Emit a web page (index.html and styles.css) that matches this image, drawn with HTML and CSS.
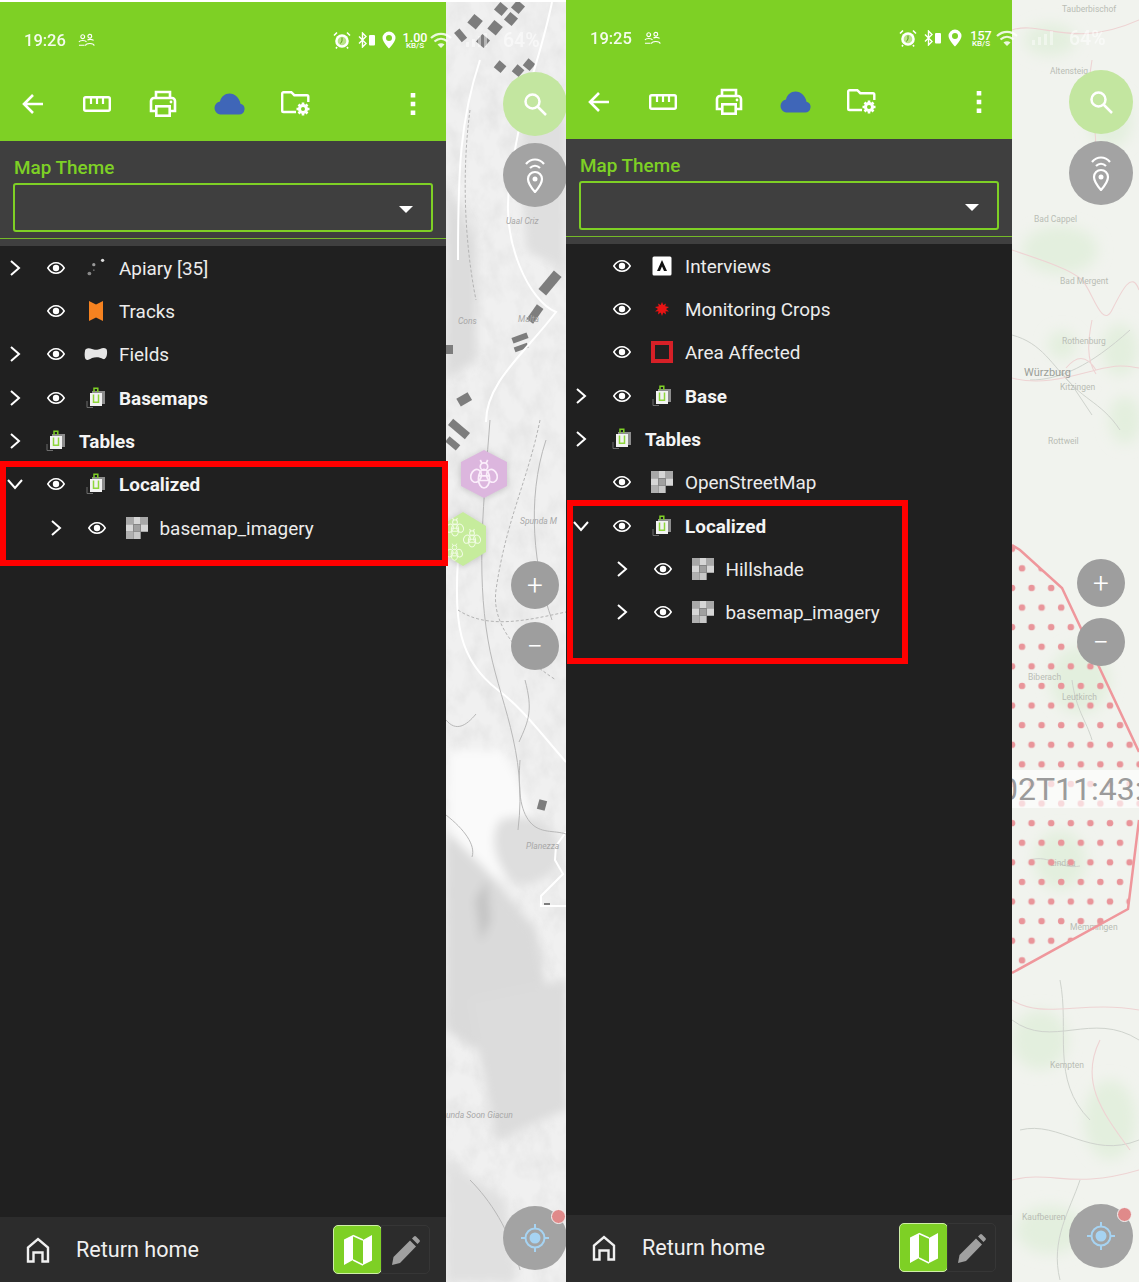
FILE: index.html
```html
<!DOCTYPE html>
<html lang="en">
  <head>
    <meta charset="utf-8" />
    <title>Map layers</title>
    <link rel="stylesheet" href="styles.css">
  </head>
  <body>
    <!-- shared icons -->
    <svg class="defs" width="0" height="0">
      <symbol id="i-back" viewBox="0 0 24 24"><path d="M22 12H4M12 3l-9 9 9 9" fill="none" stroke="currentColor" stroke-width="2.6"/></symbol>
      <symbol id="i-ruler" viewBox="0 0 28 16"><rect x="1.2" y="1.2" width="25.6" height="13.6" rx="1.5" fill="none" stroke="currentColor" stroke-width="2.4"/><path d="M8 2v6M14 2v6M20 2v6" stroke="currentColor" stroke-width="2.2"/></symbol>
      <symbol id="i-print" viewBox="0 0 28 28"><path d="M7 8V2h14v6M7 21H2V11a3 3 0 0 1 3-3h18a3 3 0 0 1 3 3v10h-5" fill="none" stroke="currentColor" stroke-width="2.6"/><rect x="7.3" y="16.3" width="13.4" height="9.4" fill="none" stroke="currentColor" stroke-width="2.6"/><circle cx="22" cy="12" r="1.4" fill="currentColor"/></symbol>
      <symbol id="i-cloud" viewBox="0 0 31 22"><path d="M6 21.5h19a5.500 5.500 0 0 0 1.500-10.800C25.500 5 21 .5 15.500.5 11 .5 7 3.500 6 8.500A6.500 6.500 0 0 0 .5 15 6.500 6.500 0 0 0 6 21.500z" fill="currentColor"/></symbol>
      <symbol id="i-folder" viewBox="0 0 30 26"><path d="M15 21H2.500a1.300 1.300 0 0 1-1.300-1.300V2.500A1.300 1.300 0 0 1 2.500 1.200h7.800l3 3H26a1.300 1.300 0 0 1 1.300 1.300V11" fill="none" stroke="currentColor" stroke-width="2.400"/><circle cx="22" cy="18" r="3.500" fill="none" stroke="currentColor" stroke-width="3"/><path d="M22 11.500v3M22 21.500v3M15.500 18h3M25.500 18h3M17.500 13.500l2 2M24.500 20.500l2 2M26.500 13.500l-2 2M19.500 20.500l-2 2" stroke="currentColor" stroke-width="2.600"/></symbol>
      <symbol id="i-more" viewBox="0 0 6 24"><path d="M.7 1h4.600v4.600H.7zM.7 9.700h4.600v4.600H.7zM.7 18.400h4.600V23H.7z" fill="currentColor"/></symbol>
      <symbol id="i-people" viewBox="0 0 18 14"><circle cx="5" cy="3.500" r="2" fill="none" stroke="currentColor" stroke-width="1.200"/><circle cx="12.500" cy="3" r="2" fill="none" stroke="currentColor" stroke-width="1.200"/><path d="M1 9c1-2 7-2 8 0M8 13c0-3 9-3 9 0M1 12.500h6M10 7c1.500-1 5-1 6.500.5" fill="none" stroke="currentColor" stroke-width="1.200"/></symbol>
      <symbol id="i-alarm" viewBox="0 0 18 18"><circle cx="9" cy="10" r="6.800" fill="currentColor"/><circle cx="9" cy="10" r="4.300" fill="#b9e585"/><path d="M9 6.500V10l-1.500 2.500" fill="none" stroke="#5c9a18" stroke-width="1"/><path d="M1 4.500 4 1.500M17 4.500l-3-3M4 16l-1 1.500M14 16l1 1.500" stroke="currentColor" stroke-width="1.600"/></symbol>
      <symbol id="i-bt" viewBox="0 0 18 16"><path d="M1 4.500l7 7-3.500 3.500V1L8 4.500l-7 7" fill="none" stroke="currentColor" stroke-width="1.400"/><rect x="11" y="3" width="6" height="10.500" rx="1" fill="currentColor"/></symbol>
      <symbol id="i-pin" viewBox="0 0 14 18"><path fill-rule="evenodd" d="M7 .5A6.500 6.500 0 0 0 .5 7C.5 11 7 17.500 7 17.500S13.500 11 13.500 7A6.500 6.500 0 0 0 7 .5zM7 4a3 3 0 1 1 0 6 3 3 0 0 1 0-6z" fill="currentColor"/></symbol>
      <symbol id="i-wifi" viewBox="0 0 22 16"><path d="M1 6c6-5.500 14-5.500 20 0M4.500 9.500c4-3.500 9-3.500 13 0" fill="none" stroke="currentColor" stroke-width="2.200"/><path d="M7.500 12.500c2-1.800 5-1.800 7 0L11 16z" fill="currentColor"/></symbol>
      <symbol id="i-signal" viewBox="0 0 22 14"><path d="M0 9h3v5H0zM6 6h3v8H6zM12 3h3v11h-3zM18 0h3v14h-3z" fill="currentColor"/></symbol>
      <symbol id="i-chev" viewBox="0 0 12 18"><path d="M2 2l8 7-8 7" fill="none" stroke="currentColor" stroke-width="2"/></symbol>
      <symbol id="i-down" viewBox="0 0 18 12"><path d="M2 2l7 8 7-8" fill="none" stroke="currentColor" stroke-width="2"/></symbol>
      <symbol id="i-eye" viewBox="0 0 18 12"><path d="M.8 6C3 2.500 5.800.8 9 .8s6 1.700 8.200 5.200C15 9.500 12.200 11.200 9 11.200S3 9.500.8 6z" fill="none" stroke="currentColor" stroke-width="1.500"/><circle cx="9" cy="6" r="3.200" fill="currentColor"/></symbol>
      <symbol id="i-group" viewBox="0 0 20 22"><path d="M1 14v6.500h6" fill="none" stroke="#6d6d6d" stroke-width="1"/><rect x="6" y="4" width="13" height="13" fill="#8d8d8d"/><rect x="4" y="6" width="12" height="13" fill="#f2f2f2"/><path d="M8 5V1.200h3.800V5" fill="none" stroke="#7ed025" stroke-width="1.500"/><path d="M7.500 7.500v7.800h5V7.500" fill="none" stroke="#8fd63c" stroke-width="1.500"/></symbol>
      <symbol id="i-raster" viewBox="0 0 3 3"><path d="M0 0h1v1H0zM2 0h1v1H2z" fill="#a8a8a8"/><path d="M1 0h1v1H1zM0 1h1v1H0zM2 1h1v1H2z" fill="#d6d6d6"/><path d="M1 1h1v1H1z" fill="#a0a0a0"/><path d="M0 2h1v1H0z" fill="#b0b0b0"/><path d="M1 2h1v1H1z" fill="#c8c8c8"/></symbol>
      <symbol id="i-points" viewBox="0 0 20 20"><circle cx="16" cy="3" r="1.500" fill="#ddd"/><circle cx="8" cy="7" r="1.500" fill="#999"/><circle cx="4" cy="15" r="1.700" fill="#888"/><circle cx="8" cy="12" r="0.800" fill="#666"/></symbol>
      <symbol id="i-tracks" viewBox="0 0 16 22"><path d="M1 1l7 3.500L15 1v20l-7-3.500L1 21z" fill="#f58220"/></symbol>
      <symbol id="i-fields" viewBox="0 0 24 15"><path d="M1 4C1 1 5 .5 8 2c2 1 6 1 8 0 3-1.500 7-1.500 7 2 .5 4-1 9-4 8-3-2-8-2-11-1-3 2-6 3-7 0C.5 9 .5 6 1 4z" fill="#e6e6e6"/></symbol>
      <symbol id="i-tent" viewBox="0 0 20 20"><rect x=".5" y=".5" width="19" height="19" rx="1.500" fill="#fff"/><path d="M10 4l5 11H5z" fill="#111"/><path d="M10 10.500l2 4.500H8z" fill="#fff"/></symbol>
      <symbol id="i-splat" viewBox="0 0 14 14"><path d="M7 0l1.300 3L11 1.500 10.200 4.300 14 5l-3 2 3 2.500-3.500-.300L11 12.500 8.300 10.500 7 14l-1.300-3.500L3 12.500l.5-3.300L0 9.500 3 7 0 5l3.800-.700L3 1.500 5.700 3z" fill="#e81414"/></symbol>
      <symbol id="i-home" viewBox="0 0 24 26"><path d="M2 24.500V10.500L12 2l10 8.500v14h-5.500v-9h-9v9z" fill="none" stroke="currentColor" stroke-width="2.400"/></symbol>
      <symbol id="i-map" viewBox="0 0 30 32"><path d="M1 5.500L10 1v25l-9 5zM20 6l9-5v25.500L20 31z" fill="currentColor"/><path d="M10 1.500l10 4.500M10 26l10 5" stroke="currentColor" stroke-width="1.400"/></symbol>
      <symbol id="i-pencil" viewBox="0 0 30 32"><path d="M1 31l1.500-8L19 6.500l6 6L9 29zM21 4.500l2-2a1.500 1.500 0 0 1 2 0l3.500 3.500a1.500 1.500 0 0 1 0 2l-2 2z" fill="currentColor"/></symbol>
      <symbol id="i-search" viewBox="0 0 24 24"><circle cx="9.500" cy="9.500" r="7" fill="none" stroke="currentColor" stroke-width="2.500"/><path d="M14.500 14.500L23 23" stroke="currentColor" stroke-width="2.500"/></symbol>
      <symbol id="i-geo" viewBox="0 0 24 36"><path d="M3 7c5-6 13-6 18 0M7 11c3-3 7-3 10 0" fill="none" stroke="currentColor" stroke-width="2.200"/><path d="M12 15a7 7 0 0 0-7 7c0 5 7 13 7 13s7-8 7-13a7 7 0 0 0-7-7z" fill="none" stroke="currentColor" stroke-width="2.200"/><circle cx="12" cy="22" r="2.500" fill="currentColor"/></symbol>
      <symbol id="i-target" viewBox="0 0 30 30"><circle cx="15" cy="15" r="9.500" fill="none" stroke="currentColor" stroke-width="2"/><circle cx="15" cy="15" r="5.500" fill="currentColor"/><path d="M15 1v5M15 24v5M1 15h5M24 15h5" stroke="currentColor" stroke-width="2"/></symbol>
      <symbol id="i-bee" viewBox="0 0 30 36"><g fill="none" stroke="currentColor" stroke-width="1.800"><path d="M11 3l2 4M19 3l-2 4"/><circle cx="15" cy="10" r="4"/><ellipse cx="15" cy="23" rx="6" ry="10"/><path d="M9.500 20h11M9.500 25h11"/><ellipse cx="6.500" cy="20" rx="5.500" ry="7" transform="rotate(20 6.500 20)"/><ellipse cx="23.500" cy="20" rx="5.500" ry="7" transform="rotate(-20 23.500 20)"/></g></symbol>
    </svg>

    <!-- first shot -->
    <div class="phone phone-first">
      <div class="panel">
        <div class="appbar">
          <div class="status">
            <span class="clock">19:26</span>
            <svg class="st-people"><use href="#i-people"/></svg>
            <div class="sys">
              <svg class="st-alarm"><use href="#i-alarm"/></svg>
              <svg class="st-bt"><use href="#i-bt"/></svg>
              <svg class="st-pin"><use href="#i-pin"/></svg>
              <span class="speed">1.00<small>KB/S</small></span>
              <svg class="st-wifi"><use href="#i-wifi"/></svg>
              <svg class="st-signal"><use href="#i-signal"/></svg>
              <span class="batt">64%</span>
            </div>
          </div>
          <div class="toolbar">
            <svg class="tb-back"><use href="#i-back"/></svg>
            <svg class="tb-ruler"><use href="#i-ruler"/></svg>
            <svg class="tb-print"><use href="#i-print"/></svg>
            <svg class="tb-cloud"><use href="#i-cloud"/></svg>
            <svg class="tb-folder"><use href="#i-folder"/></svg>
            <svg class="tb-more"><use href="#i-more"/></svg>
          </div>
        </div>
        <div class="theme">
          <div class="theme-label">Map Theme</div>
          <div class="theme-select"><span class="caret"></span></div>
          <div class="theme-rule"></div>
        </div>
        <div class="layers">
          <div class="row">
            <span class="chev"><svg class="ic-chev"><use href="#i-chev"/></svg></span>
            <span class="slot"><svg class="ic-eye"><use href="#i-eye"/></svg></span>
            <span class="slot"><svg class="ic-22"><use href="#i-points"/></svg></span>
            <span class="name">Apiary [35]</span>
          </div>
          <div class="row">
            <span class="chev"></span>
            <span class="slot"><svg class="ic-eye"><use href="#i-eye"/></svg></span>
            <span class="slot"><svg class="ic-tracks"><use href="#i-tracks"/></svg></span>
            <span class="name">Tracks</span>
          </div>
          <div class="row">
            <span class="chev"><svg class="ic-chev"><use href="#i-chev"/></svg></span>
            <span class="slot"><svg class="ic-eye"><use href="#i-eye"/></svg></span>
            <span class="slot"><svg class="ic-fields"><use href="#i-fields"/></svg></span>
            <span class="name">Fields</span>
          </div>
          <div class="row">
            <span class="chev"><svg class="ic-chev"><use href="#i-chev"/></svg></span>
            <span class="slot"><svg class="ic-eye"><use href="#i-eye"/></svg></span>
            <span class="slot"><svg class="ic-group"><use href="#i-group"/></svg></span>
            <span class="name bold">Basemaps</span>
          </div>
          <div class="row">
            <span class="chev"><svg class="ic-chev"><use href="#i-chev"/></svg></span>
            <span class="slot"><svg class="ic-group"><use href="#i-group"/></svg></span>
            <span class="name bold">Tables</span>
          </div>
          <div class="row">
            <span class="chev"><svg class="ic-down"><use href="#i-down"/></svg></span>
            <span class="slot"><svg class="ic-eye"><use href="#i-eye"/></svg></span>
            <span class="slot"><svg class="ic-group"><use href="#i-group"/></svg></span>
            <span class="name bold">Localized</span>
          </div>
          <div class="row child">
            <span class="chev"><svg class="ic-chev"><use href="#i-chev"/></svg></span>
            <span class="slot"><svg class="ic-eye"><use href="#i-eye"/></svg></span>
            <span class="slot"><svg class="ic-22"><use href="#i-raster"/></svg></span>
            <span class="name">basemap_imagery</span>
          </div>
        </div>
        <div class="bottombar">
          <svg class="ic-home"><use href="#i-home"/></svg>
          <span class="home-label">Return home</span>
          <div class="mode">
            <span class="mode-on"><svg class="ic-mode"><use href="#i-map"/></svg></span>
            <span class="mode-off"><svg class="ic-mode"><use href="#i-pencil"/></svg></span>
          </div>
        </div>
      </div>
      <div class="map map-first">
        <svg class="map-art" viewBox="446 2 120 1280" preserveAspectRatio="none">
          <defs>
            <filter id="hills" x="0" y="0" width="100%" height="100%">
              <feTurbulence type="fractalNoise" baseFrequency="0.06 0.04" numOctaves="4" seed="7"/>
              <feColorMatrix values="0 0 0 0 0.6  0 0 0 0 0.6  0 0 0 0 0.6  .55 0 0 0 -0.21"/>
            </filter>
            <filter id="soft" x="-30%" y="-30%" width="160%" height="160%">
              <feGaussianBlur stdDeviation="5"/>
            </filter>
          </defs>
          <rect x="446" y="2" width="120" height="1280" fill="#f0f0f0"/>
          <rect x="446" y="2" width="120" height="1280" filter="url(#hills)"/>
          <!-- bare slopes and shaded ground -->
          <g filter="url(#soft)">
            <path d="M448 750h55l30 60-20 70-65-10z" fill="#fafafa"/>
            <path d="M500 820c30-10 56 0 60 30s-40 40-50 30-24-40-10-60z" fill="#dedede"/>
            <path d="M446 830l40 40 50 60 10 60-70 60-30-20z" fill="#dadada"/>
            <path d="M475 900l12-20 4 40-10 22z" fill="#c4c4c4"/>
            <path d="M446 180l30 60v120l-30 20z" fill="#dcdcdc"/>
            <path d="M520 100l46 20v150l-40-20z" fill="#dfdfdf"/>
            <path d="M470 1000l96-20v130l-70 30z" fill="#dcdcdc"/>
            <path d="M446 1160l60 40 10 82h-70z" fill="#e0e0e0"/>
          </g>
          <g fill="#7d7d7d">
            <rect x="470" y="16" width="11" height="11" transform="rotate(40 475 21)"/>
            <rect x="490" y="22" width="11" height="11" transform="rotate(40 495 27)"/>
            <rect x="496" y="4" width="10" height="10" transform="rotate(40 501 9)"/>
            <rect x="513" y="2" width="10" height="10" transform="rotate(40 518 7)"/>
            <rect x="478" y="36" width="10" height="10" transform="rotate(40 483 41)"/>
            <rect x="506" y="14" width="10" height="10" transform="rotate(40 511 19)"/>
            <rect x="455" y="32" width="12" height="7" transform="rotate(50 461 35)"/>
            <rect x="496" y="62" width="9" height="9" transform="rotate(40 500 66)"/>
            <rect x="514" y="66" width="9" height="9" transform="rotate(40 518 70)"/>
            <rect x="525" y="60" width="9" height="9" transform="rotate(40 529 64)"/>
            <rect x="538" y="278" width="24" height="10" transform="rotate(-50 550 283)"/>
            <rect x="526" y="310" width="18" height="8" transform="rotate(-55 535 314)"/>
            <rect x="512" y="335" width="16" height="6" transform="rotate(-20 520 338)"/>
            <rect x="514" y="345" width="14" height="5" transform="rotate(-20 521 347)"/>
            <rect x="446" y="345" width="7" height="9"/>
            <rect x="458" y="395" width="13" height="9" transform="rotate(-30 464 400)"/>
            <rect x="448" y="425" width="22" height="8" transform="rotate(40 459 429)"/>
            <rect x="446" y="440" width="14" height="7" transform="rotate(40 453 443)"/>
            <rect x="538" y="800" width="8" height="10" transform="rotate(15 542 805)"/>
            <rect x="544" y="903" width="6" height="4"/>
          </g>
          <g fill="none" stroke="#fff" stroke-width="2">
            <path d="M552 2c-12 60-30 90-42 180-10 60 20 120 46 130-30 40-70 70-70 110"/>
            <path d="M458 560c-4 60 0 100 40 130 24 18 40 40 68 72"/>
            <path d="M480 60c-20 60-22 110-22 200"/>
            <path d="M566 832l-10 14-1 14 8 14-22 22v10h26"/>
          </g>
          <g fill="none" stroke="#b4b4b4" stroke-width="1" stroke-dasharray="3 2">
            <path d="M540 420c-12 60-34 100-44 170-4 30 14 60 60 90"/>
            <path d="M458 610c30 20 70 10 108 2"/>
            <path d="M470 110c-8 60-6 130 6 190"/>
          </g>
          <g fill="none" stroke="#b8b8b8" stroke-width="1">
            <path d="M490 420c-6 80-14 150-2 220 10 60 40 110 30 190"/>
            <path d="M546 440c-20 60-12 130 6 180"/>
            <path d="M470 1180c20 20 40 50 50 90"/>
            <path d="M446 720c10 12 20 6 30-6 M525 680c8 30 4 40-6 62 M520 760c-2 30 0 50 10 62s24 8 36 12"/>
            <path d="M446 815c18 14 30 30 26 42"/>
          </g>
          <g class="map-text">
            <text x="506" y="224">Uaal Criz</text>
            <text x="458" y="324">Cons</text>
            <text x="518" y="322">Malta</text>
            <text x="520" y="524">Spunda M</text>
            <text x="526" y="849">Planezza</text>
            <text x="446" y="1118">unda Soon Giacun</text>
          </g>
          <g filter="drop-shadow(0 1px 3px rgba(0,0,0,.18))">
            <polygon points="484,450 507,462 507,486 484,498 461,486 461,462" fill="#dcb6de"/>
            <polygon points="463,512 486,526 486,552 463,566 440,552 440,526" fill="#c6ec9c"/>
          </g>
          <g color="#fbeefb"><use href="#i-bee" x="470" y="457" width="28" height="34"/></g>
          <g color="#f1fbe4">
            <use href="#i-bee" x="446" y="516" width="18" height="22"/>
            <use href="#i-bee" x="463" y="527" width="18" height="22"/>
            <use href="#i-bee" x="446" y="542" width="17" height="20"/>
          </g>
        </svg>
        <span class="fab fab-search f-a"><svg class="ic-search"><use href="#i-search"/></svg></span>
        <span class="fab fab-geo f-b"><svg class="ic-geo"><use href="#i-geo"/></svg></span>
        <span class="zoom f-c">+</span>
        <span class="zoom f-d">&minus;</span>
        <span class="fab fab-geo f-e"><svg class="ic-target"><use href="#i-target"/></svg><i class="recdot"></i></span>
      </div>
      <div class="mark mark-first"></div>
    </div>

    <!-- second shot -->
    <div class="phone phone-second">
      <div class="panel">
        <div class="appbar">
          <div class="status">
            <span class="clock">19:25</span>
            <svg class="st-people"><use href="#i-people"/></svg>
            <div class="sys">
              <svg class="st-alarm"><use href="#i-alarm"/></svg>
              <svg class="st-bt"><use href="#i-bt"/></svg>
              <svg class="st-pin"><use href="#i-pin"/></svg>
              <span class="speed">157<small>KB/S</small></span>
              <svg class="st-wifi"><use href="#i-wifi"/></svg>
              <svg class="st-signal"><use href="#i-signal"/></svg>
              <span class="batt">64%</span>
            </div>
          </div>
          <div class="toolbar">
            <svg class="tb-back"><use href="#i-back"/></svg>
            <svg class="tb-ruler"><use href="#i-ruler"/></svg>
            <svg class="tb-print"><use href="#i-print"/></svg>
            <svg class="tb-cloud"><use href="#i-cloud"/></svg>
            <svg class="tb-folder"><use href="#i-folder"/></svg>
            <svg class="tb-more"><use href="#i-more"/></svg>
          </div>
        </div>
        <div class="theme">
          <div class="theme-label">Map Theme</div>
          <div class="theme-select"><span class="caret"></span></div>
          <div class="theme-rule"></div>
        </div>
        <div class="layers">
          <div class="row">
            <span class="chev"></span>
            <span class="slot"><svg class="ic-eye"><use href="#i-eye"/></svg></span>
            <span class="slot"><svg class="ic-20"><use href="#i-tent"/></svg></span>
            <span class="name">Interviews</span>
          </div>
          <div class="row">
            <span class="chev"></span>
            <span class="slot"><svg class="ic-eye"><use href="#i-eye"/></svg></span>
            <span class="slot"><svg class="ic-splat"><use href="#i-splat"/></svg></span>
            <span class="name">Monitoring Crops</span>
          </div>
          <div class="row">
            <span class="chev"></span>
            <span class="slot"><svg class="ic-eye"><use href="#i-eye"/></svg></span>
            <span class="slot"><span class="ic-area"></span></span>
            <span class="name">Area Affected</span>
          </div>
          <div class="row">
            <span class="chev"><svg class="ic-chev"><use href="#i-chev"/></svg></span>
            <span class="slot"><svg class="ic-eye"><use href="#i-eye"/></svg></span>
            <span class="slot"><svg class="ic-group"><use href="#i-group"/></svg></span>
            <span class="name bold">Base</span>
          </div>
          <div class="row">
            <span class="chev"><svg class="ic-chev"><use href="#i-chev"/></svg></span>
            <span class="slot"><svg class="ic-group"><use href="#i-group"/></svg></span>
            <span class="name bold">Tables</span>
          </div>
          <div class="row">
            <span class="chev"></span>
            <span class="slot"><svg class="ic-eye"><use href="#i-eye"/></svg></span>
            <span class="slot"><svg class="ic-22"><use href="#i-raster"/></svg></span>
            <span class="name">OpenStreetMap</span>
          </div>
          <div class="row">
            <span class="chev"><svg class="ic-down"><use href="#i-down"/></svg></span>
            <span class="slot"><svg class="ic-eye"><use href="#i-eye"/></svg></span>
            <span class="slot"><svg class="ic-group"><use href="#i-group"/></svg></span>
            <span class="name bold">Localized</span>
          </div>
          <div class="row child">
            <span class="chev"><svg class="ic-chev"><use href="#i-chev"/></svg></span>
            <span class="slot"><svg class="ic-eye"><use href="#i-eye"/></svg></span>
            <span class="slot"><svg class="ic-22"><use href="#i-raster"/></svg></span>
            <span class="name">Hillshade</span>
          </div>
          <div class="row child">
            <span class="chev"><svg class="ic-chev"><use href="#i-chev"/></svg></span>
            <span class="slot"><svg class="ic-eye"><use href="#i-eye"/></svg></span>
            <span class="slot"><svg class="ic-22"><use href="#i-raster"/></svg></span>
            <span class="name">basemap_imagery</span>
          </div>
        </div>
        <div class="bottombar">
          <svg class="ic-home"><use href="#i-home"/></svg>
          <span class="home-label">Return home</span>
          <div class="mode">
            <span class="mode-on"><svg class="ic-mode"><use href="#i-map"/></svg></span>
            <span class="mode-off"><svg class="ic-mode"><use href="#i-pencil"/></svg></span>
          </div>
        </div>
      </div>
      <div class="map map-second">
        <svg class="map-art" viewBox="1012 0 127 1282" preserveAspectRatio="none">
          <defs>
            <pattern id="dots" x="1012" y="558.500" width="19.600" height="39.200" patternUnits="userSpaceOnUse">
              <circle cx="10" cy="9.800" r="3.300" fill="#e9959a"/>
              <circle cx="0" cy="29.400" r="3.300" fill="#e9959a"/>
              <circle cx="19.600" cy="29.400" r="3.300" fill="#e9959a"/>
            </pattern>
            <clipPath id="area"><polygon points="1012,545 1020,550 1062,588 1139,752 1139,820 1128,909 1012,973"/></clipPath>
            <filter id="soft2" x="-30%" y="-30%" width="160%" height="160%">
              <feGaussianBlur stdDeviation="7"/>
            </filter>
          </defs>
          <rect x="1012" y="0" width="127" height="1282" fill="#f1f3ee"/>
          <!-- woods -->
          <g fill="#e3efde" filter="url(#soft2)">
            <ellipse cx="1050" cy="40" rx="26" ry="16"/>
            <ellipse cx="1110" cy="120" rx="22" ry="28"/>
            <ellipse cx="1060" cy="250" rx="38" ry="24"/>
            <ellipse cx="1120" cy="350" rx="18" ry="26"/>
            <ellipse cx="1062" cy="345" rx="14" ry="14"/>
            <ellipse cx="1125" cy="420" rx="16" ry="24"/>
            <ellipse cx="1040" cy="1040" rx="28" ry="30"/>
            <ellipse cx="1110" cy="1120" rx="26" ry="40"/>
            <ellipse cx="1050" cy="1230" rx="34" ry="24"/>
            <ellipse cx="1080" cy="680" rx="30" ry="34"/>
            <ellipse cx="1060" cy="860" rx="26" ry="30"/>
          </g>
          <g fill="none" stroke="#cfd3cd" stroke-width="1">
            <path d="M1012 335c30 8 40 30 60 50l20 30M1030 380c30 0 60-14 100-50M1060 370c20 30 40 30 60 60"/>
            <path d="M1012 1020c40 30 80-10 127 20M1060 980c10 50-10 100 30 140M1020 1130c40-10 70 30 119 10M1080 1180c-10 30-30 60-20 100"/>
            <path d="M1072 680c4 30 14 40 20 60 M1030 860c20-6 30 10 50 6"/>
          </g>
          <g fill="none" stroke="#eed3d3" stroke-width="1.100">
            <path d="M1012 30c30-10 60 20 127-10M1092 60c-10 50 20 80-10 130M1012 250c30 10 60 20 70 30s20 50 30 30 20-40 27-20"/>
            <path d="M1092 320c-4 20-6 40 4 54M1012 378c30 8 60-2 84-8s30-4 43-2M1096 370c-10-16-20-14-30-2"/>
            <path d="M1012 1000c30 20 70 0 127 10M1100 1040c-20 40 0 70 30 110M1012 1180c40-10 60 10 127-10"/>
          </g>
          <g class="map-text faint">
            <text x="1062" y="12">Tauberbischof</text>
            <text x="1050" y="74">Altensteig</text>
            <text x="1034" y="222">Bad Cappel</text>
            <text x="1060" y="284">Bad Mergent</text>
            <text x="1024" y="376" class="strong">Würzburg</text>
            <text x="1062" y="344">Rothenburg</text>
            <text x="1060" y="390">Kitzingen</text>
            <text x="1048" y="444">Rottweil</text>
            <text x="1050" y="1068">Kempten</text>
            <text x="1022" y="1220">Kaufbeuren</text>
            <text x="1070" y="930">Memmingen</text>
            <text x="1028" y="680">Biberach</text>
            <text x="1062" y="700">Leutkirch</text>
            <text x="1050" y="866">Lindau</text>
          </g>
          <rect x="1012" y="540" width="127" height="440" fill="url(#dots)" clip-path="url(#area)"/>
          <polyline points="1012,545 1020,550 1062,588 1139,752" fill="none" stroke="#ef979c" stroke-width="2.500"/>
          <polyline points="1139,820 1128,909 1012,973" fill="none" stroke="#ef979c" stroke-width="2.500"/>
        </svg>
        <span class="stamp">02T11:43:</span>
        <span class="fab fab-search f-a"><svg class="ic-search"><use href="#i-search"/></svg></span>
        <span class="fab fab-geo f-b"><svg class="ic-geo"><use href="#i-geo"/></svg></span>
        <span class="zoom f-c">+</span>
        <span class="zoom f-d">&minus;</span>
        <span class="fab fab-geo f-e"><svg class="ic-target"><use href="#i-target"/></svg><i class="recdot"></i></span>
      </div>
      <div class="mark mark-second"></div>
    </div>
  </body>
</html>
```

FILE: styles.css
```css
html,
body {
  margin: 0;
  padding: 0;
}
body {
  display: flex;
  width: 1139px;
  height: 1282px;
  overflow: hidden;
  background: #fff;
  font-family: Roboto, "Liberation Sans", sans-serif;
}
svg {
  display: block;
}
.defs {
  position: absolute;
}

.phone {
  position: relative;
  display: flex;
  height: 1280px;
}
.phone-first {
  width: 566px;
  margin-top: 2px;
}
.phone-second {
  width: 573px;
  height: 1282px;
}

/* left part of the shot */
.panel {
  position: relative;
  z-index: 1;
  display: flex;
  flex-direction: column;
  width: 446px;
  flex: none;
  background: #202020;
}
.appbar {
  height: 139px;
  flex: none;
  background: #7ed025;
  color: #fff;
}
.status {
  display: flex;
  align-items: center;
  height: 24px;
  padding: 26px 0 0 24px;
  white-space: nowrap;
}
.clock {
  width: 54px;
  flex: none;
  font-size: 16.5px;
  font-weight: 500;
  opacity: .92;
}
.st-people {
  width: 17px;
  height: 14px;
  flex: none;
}
.sys {
  display: flex;
  align-items: center;
  flex: none;
  margin-left: 238px;
}
.st-alarm {
  width: 18px;
  height: 18px;
}
.st-bt {
  width: 18px;
  height: 16px;
  margin-left: 7px;
}
.st-pin {
  width: 14px;
  height: 18px;
  margin-left: 6px;
}
.speed {
  display: flex;
  flex-direction: column;
  align-items: center;
  width: 26px;
  margin-left: 6px;
  font-size: 12.5px;
  font-weight: 500;
  line-height: 13px;
}
.speed small {
  font-size: 8px;
  line-height: 8px;
  margin-top: -2px;
}
.st-wifi {
  width: 22px;
  height: 16px;
  margin-left: 2px;
  opacity: .85;
}
.st-signal {
  width: 22px;
  height: 14px;
  margin-left: 14px;
  opacity: .45;
}
.batt {
  margin-left: 15px;
  font-size: 19.5px;
  font-weight: 500;
  opacity: .55;
}

.toolbar {
  display: flex;
  align-items: center;
  height: 56px;
  padding-top: 24px;
}
.tb-back {
  width: 24px;
  height: 24px;
  margin-left: 21px;
}
.tb-ruler {
  width: 28px;
  height: 16px;
  margin-left: 38px;
}
.tb-print {
  width: 28px;
  height: 28px;
  margin-left: 38px;
}
.tb-cloud {
  width: 31px;
  height: 22px;
  margin-left: 37px;
  color: #3f66b8;
}
.tb-folder {
  width: 30px;
  height: 26px;
  margin-left: 36px;
}
.tb-more {
  width: 6px;
  height: 24px;
  margin-left: 99px;
}

.theme {
  display: flex;
  flex-direction: column;
  height: 105px;
  flex: none;
  box-sizing: border-box;
  padding-top: 15px;
  background: #3f3f3f;
}
.theme-label {
  margin-left: 14px;
  color: #7ed025;
  font-size: 18.9px;
  font-weight: 500;
  line-height: 24px;
  height: 27px;
}
.theme-select {
  position: relative;
  box-sizing: border-box;
  width: 420px;
  height: 49px;
  margin-left: 13px;
  border: 2px solid #7ed025;
  border-radius: 3px;
}
.caret {
  position: absolute;
  right: 18px;
  top: 21px;
  border-top: 7px solid #fff;
  border-left: 7px solid transparent;
  border-right: 7px solid transparent;
}
.theme-rule {
  height: 1px;
  margin-top: 6px;
  background: #7ed025;
  opacity: .85;
}

/* layer tree */
.layers {
  flex: 1;
  color: #ececec;
}
.row {
  display: flex;
  align-items: center;
  height: 43.33px;
  font-size: 18.9px;
}
.child {
  padding-left: 40.5px;
}
.chev {
  display: flex;
  align-items: center;
  width: 36px;
  flex: none;
  padding-left: 9px;
  box-sizing: border-box;
  color: #fff;
}
.slot {
  display: flex;
  justify-content: center;
  align-items: center;
  width: 40px;
  flex: none;
  color: #fff;
}
.name {
  margin-left: 3px;
  padding-top: 1px;
  white-space: nowrap;
}
.bold {
  font-weight: 700;
  color: #f4f4f4;
}
.ic-chev {
  width: 12px;
  height: 18px;
}
.ic-down {
  width: 18px;
  height: 12px;
  margin-left: -3px;
}
.ic-eye {
  width: 18px;
  height: 12px;
}
.ic-22 {
  width: 22px;
  height: 22px;
}
.ic-20 {
  width: 20px;
  height: 20px;
}
.ic-group {
  width: 20px;
  height: 22px;
}
.ic-tracks {
  width: 16px;
  height: 22px;
}
.ic-fields {
  width: 24px;
  height: 15px;
}
.ic-splat {
  width: 14px;
  height: 14px;
}
.ic-area {
  display: block;
  box-sizing: border-box;
  width: 22px;
  height: 22px;
  border: 4px solid #d62027;
}

.bottombar {
  display: flex;
  align-items: center;
  height: 65px;
  flex: none;
  background: #2c2c2c;
  color: #f0f0f0;
}
.phone-second .bottombar {
  padding-bottom: 2px;
}
.ic-home {
  width: 24px;
  height: 26px;
  margin-left: 26px;
}
.home-label {
  margin-left: 26px;
  font-size: 21.6px;
}
.mode {
  display: flex;
  margin-left: auto;
  margin-right: 16px;
}
.mode-on,
.mode-off {
  display: flex;
  justify-content: center;
  align-items: center;
  box-sizing: border-box;
  height: 49px;
}
.mode-on {
  width: 49px;
  background: #7ed025;
  border: 1px solid #cfeea8;
  border-radius: 5px;
  color: #fff;
}
.mode-off {
  width: 49px;
  margin-left: -1px;
  border: 1px solid #363636;
  border-radius: 0 5px 5px 0;
  color: #a0a0a0;
}
.ic-mode {
  width: 30px;
  height: 32px;
}

/* map side */
.map {
  position: relative;
  flex: 1;
  overflow: hidden;
}
.map-art {
  position: absolute;
  left: 0;
  top: 0;
  width: 100%;
  height: 100%;
}
.map-text {
  fill: #a8a8a8;
  font-size: 8.5px;
  font-style: italic;
}
.map-text.faint {
  fill: #b9bdb5;
  font-style: normal;
}
.map-text .strong {
  fill: #9b9f99;
  font-size: 11px;
}
.stamp {
  position: absolute;
  left: -14px;
  top: 770px;
  padding: 0 2px;
  color: #9b9b9b;
  background: rgba(255, 255, 255, .65);
  font-size: 32px;
  line-height: 38px;
  white-space: nowrap;
}

.fab,
.zoom {
  position: absolute;
  display: flex;
  justify-content: center;
  align-items: center;
  border-radius: 50%;
  color: #fff;
}
.fab {
  left: 57px;
  width: 64px;
  height: 64px;
}
.zoom {
  left: 65px;
  width: 48px;
  height: 48px;
  background: #9e9e9e;
  font-size: 28px;
  font-weight: 300;
}
.fab-search {
  background: #c3e6a0;
}
.fab-geo {
  background: #a3a3a3;
}
.f-a {
  top: 70px;
}
.f-b {
  top: 141px;
}
.f-c {
  top: 559px;
}
.f-d {
  top: 620px;
}
.map-second .f-d {
  top: 618px;
}
.f-e {
  top: 1204px;
}
.ic-search {
  width: 24px;
  height: 24px;
}
.ic-geo {
  width: 24px;
  height: 36px;
}
.ic-target {
  width: 30px;
  height: 30px;
  color: #a6d3f2;
}
.recdot {
  position: absolute;
  right: 1px;
  top: 3px;
  width: 13px;
  height: 13px;
  border: 1.5px solid #f4f4f4;
  border-radius: 50%;
  background: #e08a8a;
}

/* red boxes laid over the shot */
.mark {
  position: absolute;
  z-index: 2;
  box-sizing: border-box;
  border: 6px solid #f00;
}
.mark-first {
  left: 0;
  top: 459px;
  width: 448px;
  height: 105px;
}
.mark-second {
  left: 1px;
  top: 500px;
  width: 341px;
  height: 164px;
}
```
